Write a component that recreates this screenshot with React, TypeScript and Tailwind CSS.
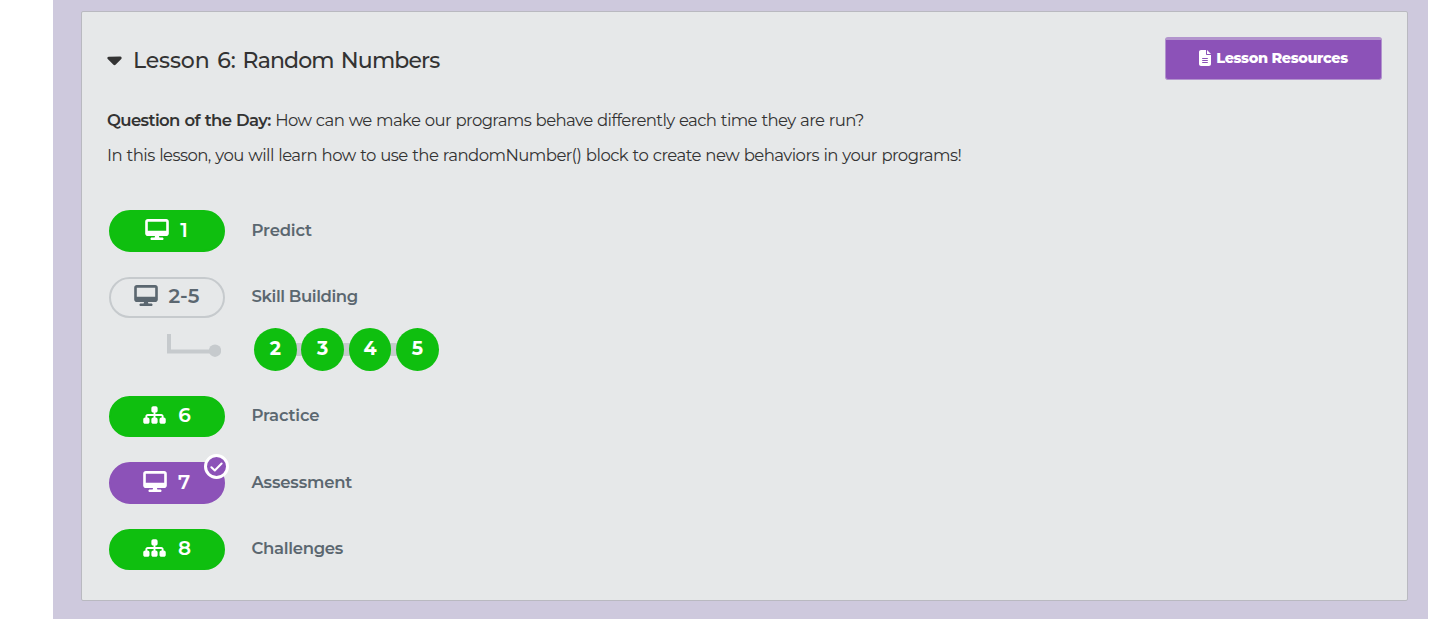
import type { ReactNode } from "react";
import { FaCaretDown, FaDesktop, FaFileLines, FaSitemap } from "react-icons/fa6";

function Pill({ tone, icon, children }: { tone: string; icon: ReactNode; children: ReactNode }) {
  return (
    <div className={"relative flex h-full w-[116px] items-center justify-center gap-[11px] rounded-full border-2 pr-px pb-[3px] text-[20px] font-semibold " + tone}>
      {icon}
      {children}
    </div>
  );
}

function Row({ className, pill, label, tracking = "tracking-[-0.18px]" }: { className: string; pill: ReactNode; label: string; tracking?: string }) {
  return (
    <div className={"flex gap-[26.5px] " + className}>
      {pill}
      <span className={"text-[16.5px] leading-6 font-semibold text-[#5b6770] " + tracking}>{label}</span>
    </div>
  );
}

const green = "border-[#0fbf0f] bg-[#0fbf0f] text-white";
const gray = "border-[#c6cacd] text-[#5b6770]";
const purple = "border-[#8c52b8] bg-[#8c52b8] text-white";
const desktop = <FaDesktop className="mb-px h-[21px] w-6" />;
const sitemap = <FaSitemap className="mb-px h-5 w-[25px]" />;

export default function App() {
  return (
    <div className="h-[619px] w-[1444px] bg-white pr-4 pl-[53px] font-['Montserrat','Inter',sans-serif]">
      <div className="h-full bg-[#cec9dd] px-7 pt-[11px]">
        <section className="h-[590px] w-[1327px] rounded-[2px] border border-[#b9b9c0] bg-[#e6e8e9] pt-[25px] pr-[25px] pl-[25px] text-[#333]">
          <header className="flex h-[43px] justify-between">
            <div className="flex items-center gap-[7px] pt-[3px]">
              <FaCaretDown className="mb-0.5 -ml-1 size-[23px]" />
              <h2 className="pt-px text-[22px] leading-[30px] font-[550] tracking-[-0.85px] [word-spacing:2px]">
                <span className="tracking-[-0.15px]">Lesson 6:</span> Random Numbers
              </h2>
            </div>
            <button className="flex h-[43px] w-[217px] items-center justify-center gap-[5px] rounded-[3px] border border-t-[3px] border-[#b294cd] bg-[#8c52b8] pb-0.5 text-[14.5px] font-extrabold tracking-[-0.4px] text-white">
              <FaFileLines className="mb-0.5 h-4 w-3" />
              <span>Lesson Resources</span>
            </button>
          </header>
          <div className="mt-[23px] text-[16.5px] leading-[35px] tracking-[-0.55px] whitespace-nowrap [word-spacing:0.7px]">
            <p className="tracking-[-0.6px]"><b className="font-semibold">Question of the Day:</b> How can we make our programs behave differently each time they are run?</p>
            <p>In this lesson, you will learn how to use the randomNumber() block to create new behaviors in your programs!</p>
          </div>
          <div className="mt-[37px] ml-0.5">
            <Row className="h-[42px] [&>span]:pt-2" pill={<Pill tone={green} icon={desktop}>1</Pill>} label="Predict" />
            <Row className="mt-[25px] h-[41px] [&>span]:pt-[7px]" pill={<Pill tone={gray} icon={desktop}>2-5</Pill>} label="Skill Building" tracking="tracking-[-0.4px]" />
            <div className="flex h-[53px] items-end">
              <svg className="mb-[13px] ml-[58px] h-6 w-[54px]" viewBox="0 0 54 24">
                <path d="M2 0v17.5h46" fill="none" stroke="#c6cacd" strokeWidth="4" />
                <circle cx="48" cy="16.7" r="6.2" fill="#c6cacd" />
              </svg>
              <div className="isolate ml-[33px] flex gap-[4.8px]">
                {[2, 3, 4, 5].map((n) => (
                  <div key={n} className="relative flex size-[42.6px] items-center justify-center rounded-full bg-[#0fbf0f] pb-px text-[19px] font-bold text-white not-last:after:absolute not-last:after:top-[15px] not-last:after:left-[38px] not-last:after:-z-10 not-last:after:h-[13px] not-last:after:w-3 not-last:after:bg-[#c6cacd]">
                    {n}
                  </div>
                ))}
              </div>
            </div>
            <Row className="mt-[25px] h-[41px] [&>span]:pt-[7px]" pill={<Pill tone={green} icon={sitemap}>6</Pill>} label="Practice" />
            <Row
              className="mt-[25px] h-[42px] [&>span]:pt-2"
              pill={
                <Pill tone={purple} icon={desktop}>
                  7
                  <i className="absolute -top-[10px] -right-[6px] flex size-[25px] items-center justify-center rounded-full border-[3px] border-white bg-[#8c52b8]">
                    <svg className="h-[10px] w-[13px]" viewBox="0 0 13 10" fill="none" stroke="currentColor" strokeWidth="2" strokeLinecap="round" strokeLinejoin="round">
                      <path d="M1.4 5.2 4.8 8.5 11.6 1.5" />
                    </svg>
                  </i>
                </Pill>
              }
              label="Assessment"
            />
            <Row className="mt-[25px] h-[41px] [&>span]:pt-[7px]" pill={<Pill tone={green} icon={sitemap}>8</Pill>} label="Challenges" tracking="tracking-[-0.3px]" />
          </div>
        </section>
      </div>
    </div>
  );
}
